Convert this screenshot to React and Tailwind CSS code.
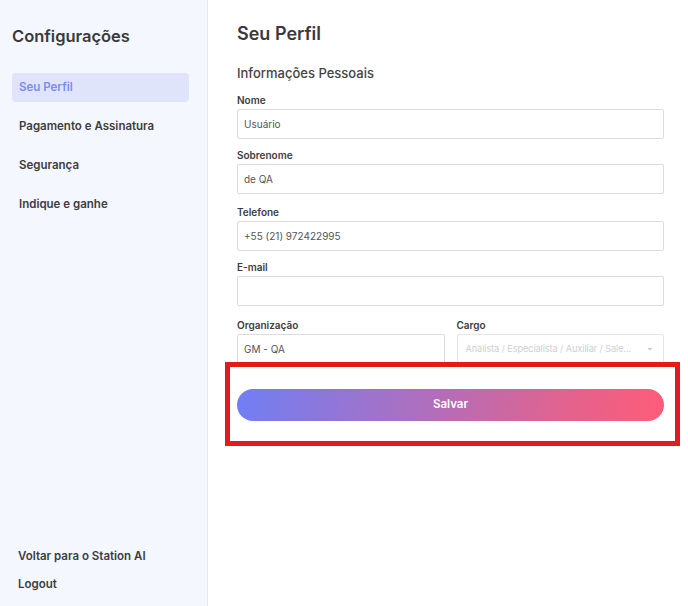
import React from "react";

function Label({ children }) {
  return <label className="text-[10px] font-semibold text-[#3d3d3d] leading-[14px] mb-[2px]">{children}</label>;
}

function Field({ label, value, className = "" }) {
  return (
    <div className={"flex flex-col " + className}>
      <Label>{label}</Label>
      <div className="h-[30px] border border-[#dcdcdf] rounded-[2px] bg-white flex items-center px-[6px] text-[10px] text-[#555]">
        <span>{value}</span>
      </div>
    </div>
  );
}

export default function App() {
  return (
    <div className="w-[688px] h-[606px] flex bg-white overflow-hidden" style={{ fontFamily: "Inter, 'Noto Sans', sans-serif" }}>
      <aside className="w-[208px] shrink-0 h-full bg-[#f4f7fe] border-r border-[#e6e8ef] flex flex-col px-[12px] pt-[24px] pb-[14px]">
        <h1 className="text-[16.5px] font-semibold text-[#3a3a3d] leading-[24px]">Configurações</h1>
        <nav className="mt-[25px] flex flex-col gap-[10px] w-[177px]">
          <div className="h-[29px] rounded-[4px] bg-[#dfe4fb] flex items-center px-[7px] text-[11.5px] font-semibold text-[#7a8cf3]">Seu Perfil</div>
          <div className="h-[29px] flex items-center px-[7px] text-[11.5px] font-semibold text-[#3d3d40]">Pagamento e Assinatura</div>
          <div className="h-[29px] flex items-center px-[7px] text-[11.5px] font-semibold text-[#3d3d40]">Segurança</div>
          <div className="h-[29px] flex items-center px-[7px] text-[11.5px] font-semibold text-[#3d3d40]">Indique e ganhe</div>
        </nav>
        <div className="mt-auto flex flex-col gap-[12px] px-[6px]">
          <div className="text-[11.5px] font-semibold text-[#3d3d40] leading-[16px]">Voltar para o Station AI</div>
          <div className="text-[11.5px] font-semibold text-[#3d3d40] leading-[16px]">Logout</div>
        </div>
      </aside>
      <main className="flex-1 relative pl-[29px] pr-[24px] pt-[22px]">
        <h2 className="text-[18px] font-semibold text-[#3a3a3d] leading-[24px]">Seu Perfil</h2>
        <h3 className="mt-[18px] text-[13px] font-medium text-[#444] leading-[18px]">Informações Pessoais</h3>
        <div className="mt-[11px] flex flex-col">
          <Field label="Nome" value="Usuário" />
          <Field label="Sobrenome" value="de QA" className="mt-[9px]" />
          <Field label="Telefone" value="+55 (21) 972422995" className="mt-[11px]" />
          <Field label="E-mail" value="" className="mt-[9px]" />
          <div className="mt-[12px] grid grid-cols-2 gap-[12px]">
            <Field label="Organização" value="GM - QA" />
            <div className="flex flex-col">
              <Label>Cargo</Label>
              <div className="h-[30px] border border-[#e6e6ea] rounded-[2px] bg-white flex items-center justify-between pl-[8px] pr-[9px] text-[9.2px] tracking-[-0.1px] text-[#cfcfd3]">
                <span className="whitespace-nowrap">Analista / Especialista / Auxiliar / Sale...</span>
                <svg width="8" height="6" viewBox="0 0 8 6" className="ml-[4px] shrink-0"><path d="M1.5 2 L4 4.5 L6.5 2 Z" fill="#c8c8cc" /></svg>
              </div>
            </div>
          </div>
        </div>
        <div className="absolute left-[17px] top-[362px] w-[455px] h-[84px] border-[5px] border-[#e31b1b] bg-white flex items-center pl-[7px] pt-[2px]">
          <button className="w-[427px] h-[32px] rounded-full text-white text-[11.5px] font-semibold bg-[linear-gradient(100deg,#707ff5_0%,#b06ebc_45%,#e06390_75%,#ff5c78_100%)]">Salvar</button>
        </div>
      </main>
    </div>
  );
}
